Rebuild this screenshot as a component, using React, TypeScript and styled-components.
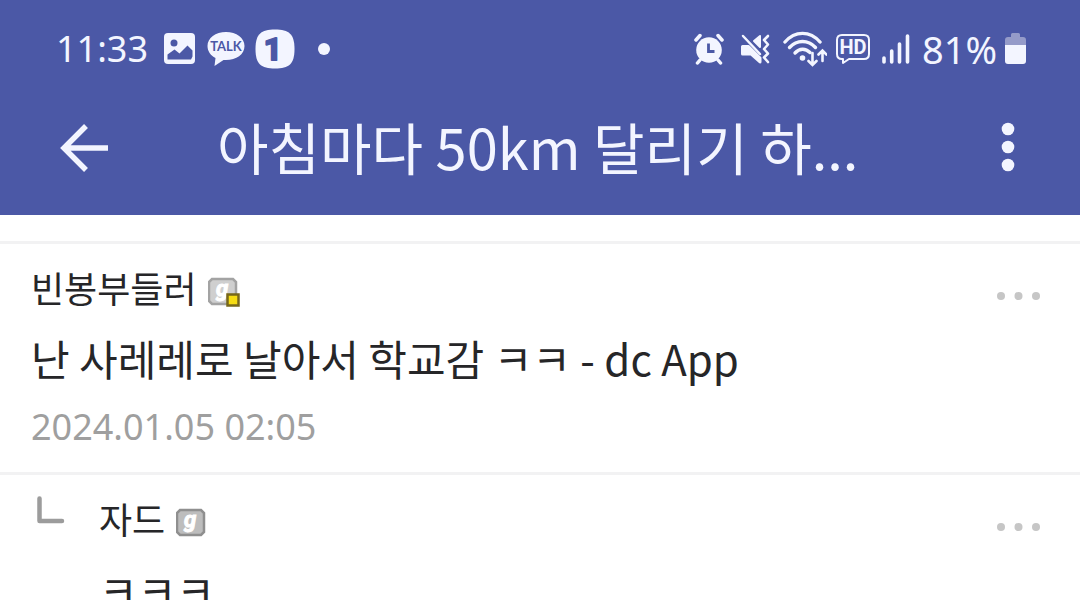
import React from 'react';
import styled, { createGlobalStyle } from 'styled-components';

const Global = createGlobalStyle`
  * { box-sizing: border-box; }
  html, body, #root { height: 100%; }
  body {
    margin: 0;
    background: #fff;
    color: #262628;
    font-family: 'Noto Sans CJK KR', 'Noto Sans', sans-serif;
    overflow: hidden;
  }
  svg { display: block; flex: none; }
  h1, h2, p { margin: 0; font-weight: 400; }
`;

const Screen = styled.div`
  height: 100%;
  display: flex;
  flex-direction: column;
  overflow: hidden;
`;

const Header = styled.header`
  flex: none;
  background: #4b58a6;
  color: #f3f5ff;
`;

const StatusBar = styled.div`
  display: flex;
  justify-content: space-between;
  align-items: center;
  height: 80px;
  padding: 20px 54px 2px 56px;
`;

const StatusGroup = styled.div<{ $gap: number }>`
  display: flex;
  align-items: center;
  gap: ${(p) => p.$gap}px;
`;

const StatusText = styled.span<{ $size: number }>`
  font-family: 'Noto Sans', sans-serif;
  font-size: ${(p) => p.$size}px;
  line-height: 40px;
`;

const Clock = styled(StatusText)`
  margin-right: 6px;
`;

const AppBar = styled.div`
  display: flex;
  align-items: center;
  height: 135px;
  padding: 0 56px;
`;

const IconButton = styled.button`
  flex: none;
  display: flex;
  padding: 0;
  border: 0;
  background: none;
  color: inherit;
  cursor: pointer;
`;

const Title = styled.h1`
  flex: 1;
  min-width: 0;
  padding: 0 106px 4px 105px;
  font-size: 56px;
  line-height: 80px;
  white-space: nowrap;
`;

const List = styled.main`
  flex: 1;
  padding-top: 26px;
`;

const Item = styled.article<{ $reply?: boolean }>`
  display: flex;
  align-items: flex-start;
  min-height: 231px;
  padding: 19px 39px 20px ${(p) => (p.$reply ? 36 : 31)}px;
  border-top: 3px solid #f2f2f3;
`;

const ReplyMark = styled.div`
  flex: none;
  width: 63px;
  padding-top: 2px;
`;

const Body = styled.div`
  flex: 1;
  min-width: 0;
`;

const Author = styled.div`
  display: flex;
  align-items: flex-end;
  gap: 11px;
`;

const Name = styled.h2`
  font-size: 36px;
  line-height: 48px;
`;

const Message = styled.p`
  margin-top: 17px;
  font-size: 42px;
  line-height: 60px;
`;

const Stamp = styled.time`
  display: block;
  margin-top: 15px;
  font-family: 'Noto Sans', sans-serif;
  font-size: 36px;
  line-height: 48px;
  color: #9f9f9f;
`;

const MoreSlot = styled.div`
  flex: none;
  padding-top: 23px;
`;

const PhotoIcon = () => (
  <svg width="31" height="32" viewBox="0 0 31 32">
    <rect x="0" y="0" width="31" height="31" rx="4" fill="#f3f5ff" />
    <circle cx="10" cy="10" r="3.500" fill="#4b58a6" />
    <path d="M3.500 26.500v-5l7-5 5 4 8-8 5 5v6l-1.500 3z" fill="#4b58a6" />
  </svg>
);

const TalkIcon = () => (
  <svg width="40" height="36" viewBox="-2 0 40 36">
    <path
      d="M19 1C8.500 1 .5 7 .5 15c0 5 3 9.500 8 12L7.500 35l9-6c11.500 1 21-5 21-14C37.500 7 29.500 1 19 1z"
      fill="#f3f5ff"
    />
    <text x="19" y="20" textAnchor="middle" fontFamily="Lato, sans-serif" fontWeight="700" fontSize="13" fill="#4b58a6">
      TALK
    </text>
  </svg>
);

const OneIcon = () => (
  <svg width="40" height="40" viewBox="0 0 40 40">
    <path
      d="M20 .5C34 .5 39.500 5 39.500 20S34 39.500 20 39.500.5 35 .5 20 6 .5 20 .5z"
      fill="#f3f5ff"
    />
    <text
      x="18"
      y="31"
      textAnchor="middle"
      fontFamily="Roboto, sans-serif"
      fontWeight="700"
      fontSize="32"
      fill="#4b58a6"
      stroke="#4b58a6"
      strokeWidth="2"
      strokeLinejoin="round"
    >
      1
    </text>
  </svg>
);

const DotIcon = () => (
  <svg width="30" height="14" viewBox="0 0 30 14">
    <circle cx="19" cy="7" r="6" fill="#f3f5ff" />
  </svg>
);

const AlarmIcon = () => (
  <svg width="38" height="32" viewBox="0 0 38 32" fill="none" stroke="#f3f5ff" strokeWidth="3.500" strokeLinecap="round">
    <circle cx="15" cy="17" r="12.800" fill="#f3f5ff" stroke="none" />
    <path d="M2 7l4-4.500M28 7l-4-4.500M6 27l-2.500 3M24 27l2.500 3" />
    <path d="M14.500 10.500v8h6" stroke="#4b58a6" strokeWidth="2.800" strokeLinecap="butt" />
  </svg>
);

const MuteIcon = () => (
  <svg width="35" height="32" viewBox="0 0 35 32" fill="none" stroke="#f3f5ff" strokeLinecap="round" strokeLinejoin="round">
    <path d="M2.500 13.500h6L20 25v4l-9-8H2.500z" fill="#f3f5ff" strokeWidth="3" />
    <path d="M14 8l6-5v11z" fill="#f3f5ff" strokeWidth="2" />
    <path d="M3 3l17 18" strokeWidth="2.500" />
    <path d="M28 3l-4 4 4 4.500-4 4.500 4 4.500-4 4 4 4.500" strokeWidth="2.600" />
  </svg>
);

const WifiIcon = () => (
  <svg width="44" height="36" viewBox="0 0 44 36" fill="none" stroke="#f3f5ff" strokeWidth="3.400" strokeLinecap="round">
    <path d="M2 11C12-.5 27-.5 37 11" />
    <path d="M6.500 16.500c7.500-8 18.500-8 26 0" />
    <path d="M12 22c4.500-5 10.500-5 15-.5" />
    <circle cx="19.500" cy="27" r="2.800" fill="#f3f5ff" stroke="none" />
    <path d="M29.500 22v11M25.500 30l4 4 4-4M39.500 30V20M35.500 23.500l4-4 4 4" strokeWidth="2.600" />
  </svg>
);

const HdIcon = () => (
  <svg width="36" height="32" viewBox="0 0 36 32">
    <path
      d="M7 2h22q5 0 5 5v14q0 5-5 5H14l-6 4v-4H7q-5 0-5-5V7q0-5 5-5z"
      fill="none"
      stroke="#f3f5ff"
      strokeWidth="2"
      strokeLinejoin="round"
    />
    <text x="18" y="21" textAnchor="middle" fontFamily="Roboto, sans-serif" fontWeight="700" fontSize="20" fill="#f3f5ff">
      HD
    </text>
  </svg>
);

const SignalIcon = () => (
  <svg width="35" height="32" viewBox="-3 0 35 32" stroke="#f3f5ff" strokeWidth="3.600" strokeLinecap="round">
    <path d="M2 25v4M9.700 18v11M17.500 11v18M25.500 3v26" />
  </svg>
);

const BatteryIcon = () => (
  <svg width="21" height="32" viewBox="0 0 21 32">
    <path d="M6 1.500Q6 0 7.500 0h6Q15 0 15 1.500V4h3q3 0 3 3v5H0V7q0-3 3-3h3z" fill="#959bc9" />
    <path d="M0 12h21v16q0 3-3 3H3q-3 0-3-3z" fill="#f3f5ff" />
  </svg>
);

const BackIcon = () => (
  <svg width="56" height="56" viewBox="0 0 56 56" fill="none" stroke="currentColor" strokeWidth="5.500">
    <path d="M52 28H8M30 6L8 28l22 22" />
  </svg>
);

const MenuIcon = () => (
  <svg width="32" height="56" viewBox="0 0 32 56" fill="currentColor">
    <circle cx="16" cy="9" r="6.300" />
    <circle cx="16" cy="27" r="6.300" />
    <circle cx="16" cy="45" r="6.300" />
  </svg>
);

const MoreIcon = () => (
  <svg width="46" height="20" viewBox="0 0 46 20" fill="#c6c6c6">
    <circle cx="6" cy="10" r="4" />
    <circle cx="23.500" cy="10" r="4" />
    <circle cx="41" cy="10" r="4" />
  </svg>
);

const CornerIcon = () => (
  <svg width="30" height="30" viewBox="0 0 30 30" fill="none" stroke="#9c9c9c" strokeWidth="4.500" strokeLinecap="round" strokeLinejoin="round">
    <path d="M3.500 2.500v22.500H26" />
  </svg>
);

const GallogBadge = ({ fixed }: { fixed?: boolean }) => (
  <svg width="32" height="34" viewBox="0 0 32 34">
    <path
      d="M4 2h21l3 3v19l-3 3H4l-3-3V5z"
      fill={fixed ? '#cfcfcf' : '#bdbdbd'}
      stroke={fixed ? '#a3a3a3' : '#8f8f8f'}
      strokeWidth="2.500"
    />
    <text
      x="14"
      y="19"
      textAnchor="middle"
      fontFamily="Roboto, sans-serif"
      fontWeight="700"
      fontStyle="italic"
      fontSize="22"
      fill="#fff"
      stroke="#fff"
      strokeWidth="1"
    >
      g
    </text>
    {fixed && <rect x="19.500" y="17.500" width="11" height="11" fill="#f6dc12" stroke="#77671a" strokeWidth="2.500" />}
  </svg>
);

interface CommentProps {
  name: string;
  text: string;
  date?: string;
  reply?: boolean;
}

const Comment = ({ name, text, date, reply }: CommentProps) => (
  <Item $reply={reply}>
    {reply && (
      <ReplyMark>
        <CornerIcon />
      </ReplyMark>
    )}
    <Body>
      <Author>
        <Name>{name}</Name>
        <GallogBadge fixed={!reply} />
      </Author>
      <Message>{text}</Message>
      {date && <Stamp>{date}</Stamp>}
    </Body>
    <MoreSlot>
      <IconButton type="button" aria-label="더보기">
        <MoreIcon />
      </IconButton>
    </MoreSlot>
  </Item>
);

export default function App() {
  return (
    <Screen>
      <Global />
      <Header>
        <StatusBar>
          <StatusGroup $gap={10}>
            <Clock $size={36}>11:33</Clock>
            <PhotoIcon />
            <TalkIcon />
            <OneIcon />
            <DotIcon />
          </StatusGroup>
          <StatusGroup $gap={8}>
            <AlarmIcon />
            <MuteIcon />
            <WifiIcon />
            <HdIcon />
            <SignalIcon />
            <StatusText $size={38}>81%</StatusText>
            <BatteryIcon />
          </StatusGroup>
        </StatusBar>
        <AppBar>
          <IconButton type="button" aria-label="뒤로">
            <BackIcon />
          </IconButton>
          <Title>아침마다 50km 달리기 하...</Title>
          <IconButton type="button" aria-label="메뉴">
            <MenuIcon />
          </IconButton>
        </AppBar>
      </Header>
      <List>
        <Comment name="빈봉부들러" text="난 사레레로 날아서 학교감 ㅋㅋ - dc App" date="2024.01.05 02:05" />
        <Comment name="자드" text="ㅋㅋㅋ" reply />
      </List>
    </Screen>
  );
}
